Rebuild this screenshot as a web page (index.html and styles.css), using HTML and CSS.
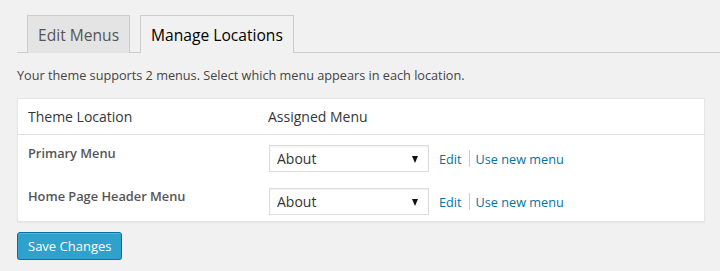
FILE: index.html
```html
<!DOCTYPE html>
<html>
<head>
<meta charset="utf-8">
<link rel="stylesheet" href="styles.css">
</head>
<body>
<div class="wrap">
  <div class="tabs">
    <a class="tab">Edit Menus</a>
    <a class="tab active">Manage Locations</a>
  </div>
  <p class="desc">Your theme supports 2 menus. Select which menu appears in each location.</p>
  <table class="locations">
    <thead>
      <tr><th class="col-loc">Theme Location</th><th>Assigned Menu</th></tr>
    </thead>
    <tbody>
      <tr>
        <td class="label">Primary Menu</td>
        <td class="assign">
          <span class="select"><select><option>About</option></select></span>
          <span class="links"><a>Edit</a><span class="sep"></span><a>Use new menu</a></span>
        </td>
      </tr>
      <tr>
        <td class="label">Home Page Header Menu</td>
        <td class="assign">
          <span class="select"><select><option>About</option></select></span>
          <span class="links"><a>Edit</a><span class="sep"></span><a>Use new menu</a></span>
        </td>
      </tr>
    </tbody>
  </table>
  <button class="btn">Save Changes</button>
</div>
</body>
</html>
```

FILE: styles.css
```css
html, body {
  margin: 0;
  padding: 0;
  background: #f1f1f1;
  font-family: "Open Sans", "Liberation Sans", sans-serif;
  color: #444;
  font-size: 13px;
}
.wrap {
  padding: 15px 0 0 17px;
}
.tabs {
  display: flex;
  border-bottom: 1px solid #ccc;
  padding-left: 10px;
  height: 37px;
}
.tab {
  display: block;
  box-sizing: border-box;
  height: 38px;
  border: 1px solid #ccc;
  border-bottom: none;
  background: #e4e4e4;
  color: #555;
  font-size: 15.6px;
  font-weight: 400;
  line-height: 24px;
  padding: 7px 10px 5px;
  margin-right: 10px;
}
.tab.active {
  background: #f1f1f1;
  color: #000;
  position: relative;
  z-index: 1;
}
.desc {
  margin: 13px 0 0;
  line-height: 19px;
  font-size: 12.7px;
  color: #444;
}
.locations {
  margin-top: 13px;
  width: 688px;
  border-collapse: collapse;
  background: #fff;
  border: 1px solid #e5e5e5;
  box-shadow: 0 1px 1px rgba(0,0,0,.04);
}
.locations th {
  text-align: left;
  font-weight: 400;
  font-size: 14px;
  color: #32373c;
  height: 35px;
  padding: 0 10px;
  border-bottom: 1px solid #e1e1e1;
  vertical-align: middle;
}
.locations th.col-loc {
  width: 220px;
}
.label {
  font-weight: 600;
  font-size: 12.8px;
  color: #555;
  padding: 9px 10px 0;
  vertical-align: top;
  height: 34px;
}
.assign {
  padding: 10px 10px 6px 11px;
  vertical-align: top;
  display: flex;
  align-items: center;
}
.select {
  position: relative;
  display: inline-block;
}
.select select {
  -webkit-appearance: none;
  appearance: none;
  width: 160px;
  height: 27px;
  box-sizing: border-box;
  border: 1px solid #ddd;
  background: #fff;
  font-family: "Open Sans", "Liberation Sans", sans-serif;
  font-size: 14px;
  color: #333;
  padding: 0 7px;
  border-radius: 0;
  box-shadow: inset 0 1px 2px rgba(0,0,0,.07);
  margin: 0;
}
.select::after {
  content: "";
  position: absolute;
  right: 11px;
  top: 11px;
  border-left: 3.5px solid transparent;
  border-right: 3.5px solid transparent;
  border-top: 7px solid #111;
}
.links {
  display: flex;
  align-items: center;
  margin-left: 10px;
  font-size: 12.7px;
}
.links a {
  color: #0074a2;
}
.sep {
  display: inline-block;
  width: 1px;
  height: 17px;
  background: #ccc;
  margin: 0 6px 0 7px;
}
.btn {
  display: block;
  margin-top: 10px;
  height: 28px;
  box-sizing: border-box;
  padding: 0 10px 1px;
  background: #2ea2cc;
  border: 1px solid #0074a2;
  border-radius: 3px;
  box-shadow: inset 0 1px 0 rgba(120,200,230,.5), 0 1px 0 rgba(0,0,0,.15);
  color: #fff;
  font-family: "Open Sans", "Liberation Sans", sans-serif;
  font-size: 13px;
  line-height: 26px;
}
```
